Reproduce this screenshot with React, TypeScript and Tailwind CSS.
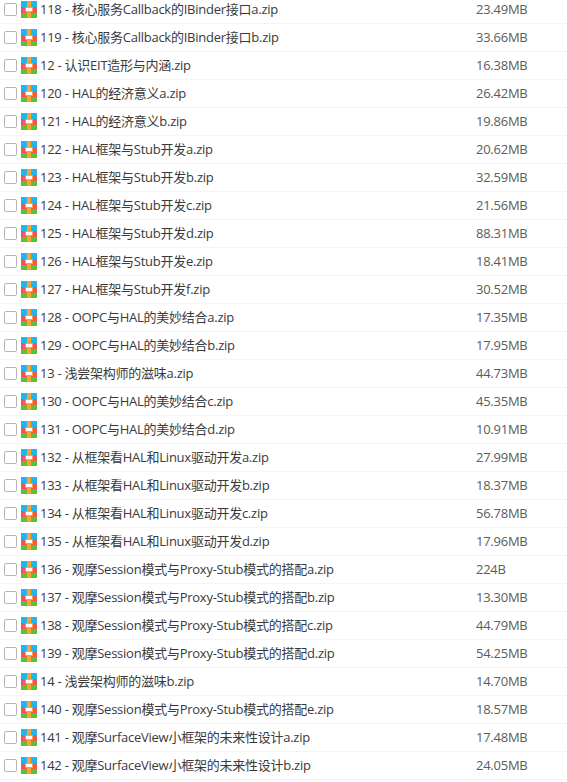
import React from 'react';

const files: [string, string][] = [
  ['118 - 核心服务Callback的IBinder接口a.zip', '23.49MB'],
  ['119 - 核心服务Callback的IBinder接口b.zip', '33.66MB'],
  ['12 - 认识EIT造形与内涵.zip', '16.38MB'],
  ['120 - HAL的经济意义a.zip', '26.42MB'],
  ['121 - HAL的经济意义b.zip', '19.86MB'],
  ['122 - HAL框架与Stub开发a.zip', '20.62MB'],
  ['123 - HAL框架与Stub开发b.zip', '32.59MB'],
  ['124 - HAL框架与Stub开发c.zip', '21.56MB'],
  ['125 - HAL框架与Stub开发d.zip', '88.31MB'],
  ['126 - HAL框架与Stub开发e.zip', '18.41MB'],
  ['127 - HAL框架与Stub开发f.zip', '30.52MB'],
  ['128 - OOPC与HAL的美妙结合a.zip', '17.35MB'],
  ['129 - OOPC与HAL的美妙结合b.zip', '17.95MB'],
  ['13 - 浅尝架构师的滋味a.zip', '44.73MB'],
  ['130 - OOPC与HAL的美妙结合c.zip', '45.35MB'],
  ['131 - OOPC与HAL的美妙结合d.zip', '10.91MB'],
  ['132 - 从框架看HAL和Linux驱动开发a.zip', '27.99MB'],
  ['133 - 从框架看HAL和Linux驱动开发b.zip', '18.37MB'],
  ['134 - 从框架看HAL和Linux驱动开发c.zip', '56.78MB'],
  ['135 - 从框架看HAL和Linux驱动开发d.zip', '17.96MB'],
  ['136 - 观摩Session模式与Proxy-Stub模式的搭配a.zip', '224B'],
  ['137 - 观摩Session模式与Proxy-Stub模式的搭配b.zip', '13.30MB'],
  ['138 - 观摩Session模式与Proxy-Stub模式的搭配c.zip', '44.79MB'],
  ['139 - 观摩Session模式与Proxy-Stub模式的搭配d.zip', '54.25MB'],
  ['14 - 浅尝架构师的滋味b.zip', '14.70MB'],
  ['140 - 观摩Session模式与Proxy-Stub模式的搭配e.zip', '18.57MB'],
  ['141 - 观摩SurfaceView小框架的未来性设计a.zip', '17.48MB'],
  ['142 - 观摩SurfaceView小框架的未来性设计b.zip', '24.05MB'],
];

const ZipIcon = () => (
  <svg width="16" height="17" viewBox="0 0 16 17" className="block shrink-0">
    <rect x="0" y="0" width="16" height="6" fill="#1fb6f0" />
    <rect x="0" y="6" width="16" height="6" fill="#f2545b" />
    <rect x="0" y="12" width="16" height="5" fill="#5fc12e" />
    <rect x="6" y="0" width="4" height="17" fill="#f7a531" />
    <rect x="4.5" y="6.5" width="7" height="4" fill="#fff" stroke="#f7a531" strokeWidth="1" />
  </svg>
);

const App = () => {
  return (
    <div className="w-full h-[782px] overflow-hidden bg-white font-['Open_Sans','Noto_Sans_CJK_SC',sans-serif] text-[13px] tracking-[-0.25px]">
      <ul className="-mt-[4px]">
        {files.map(([name, size]) => (
          <li key={name} className="flex items-center h-[28px] border-b border-[#f4f4f4]">
            <span className="ml-[4px] w-[13px] h-[13px] rounded-[2px] border border-[#b5b5b5] bg-white shrink-0" />
            <span className="ml-[4px]">
              <ZipIcon />
            </span>
            <span className="ml-[3px] text-[#3a3a3a] whitespace-nowrap">{name}</span>
            <span className="ml-auto w-[91px] text-[#5c5c5c] whitespace-nowrap">{size}</span>
          </li>
        ))}
      </ul>
    </div>
  );
};

export default App;
